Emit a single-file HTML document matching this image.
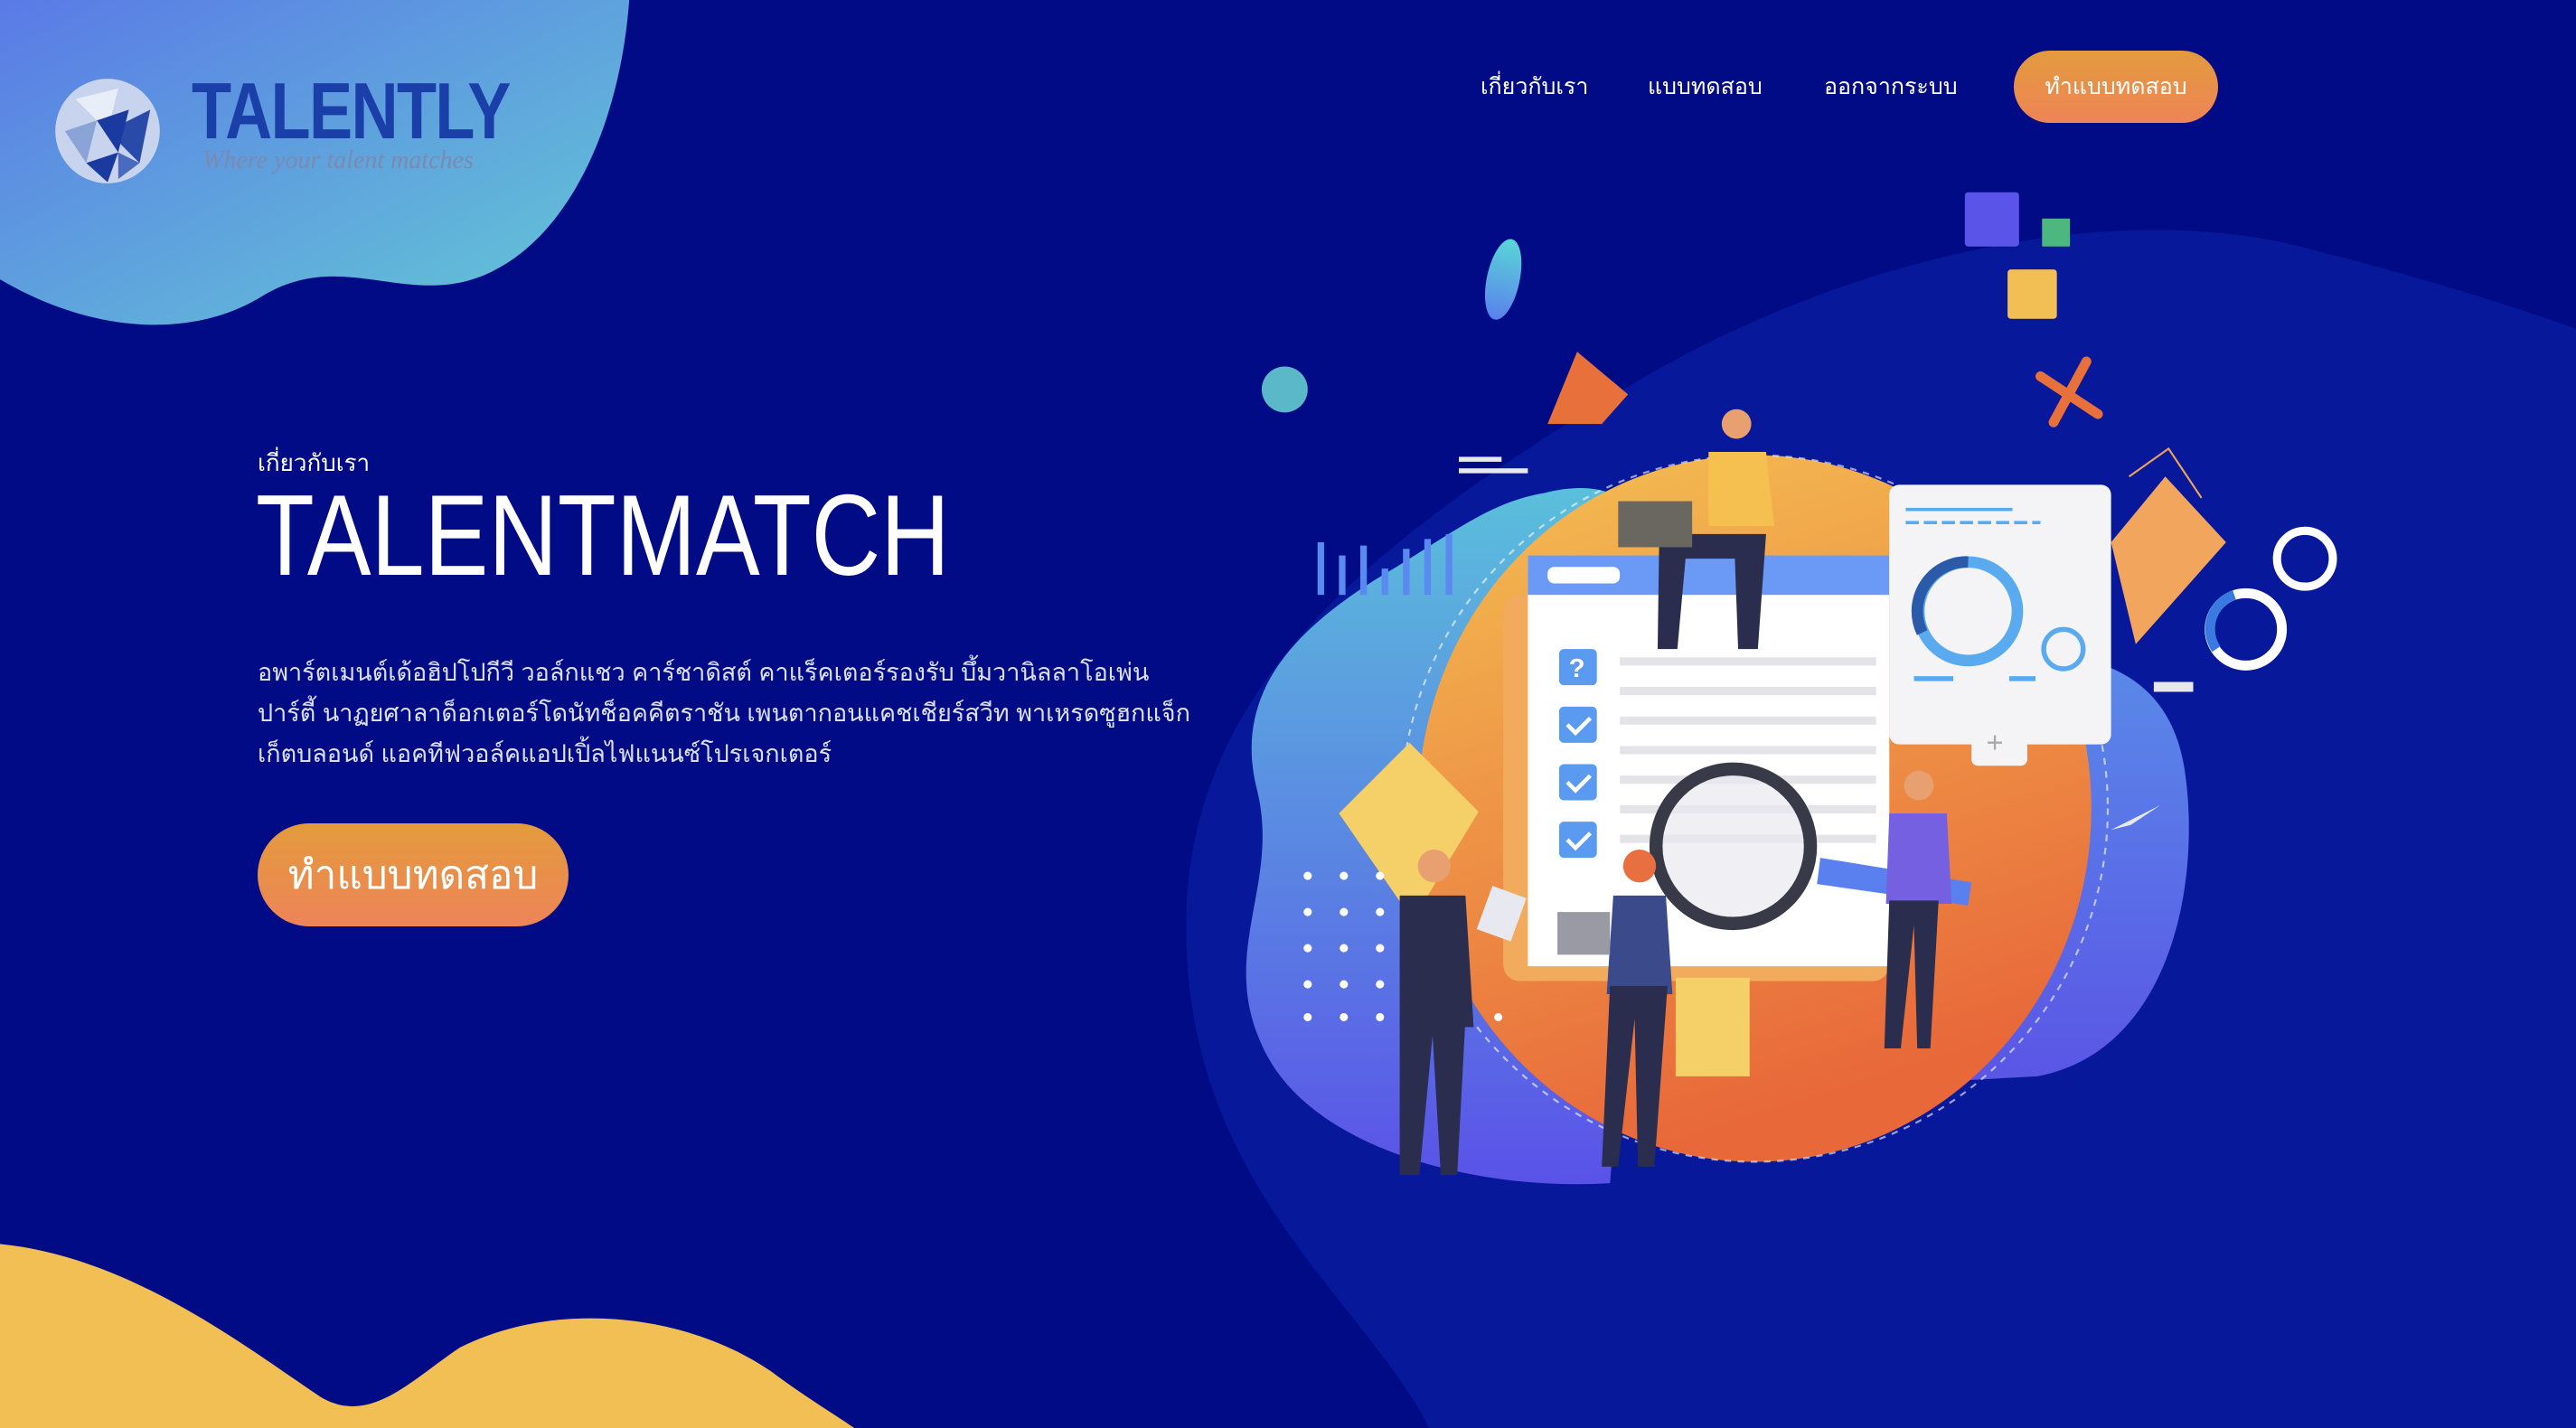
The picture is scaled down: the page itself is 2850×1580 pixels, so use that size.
<!DOCTYPE html>
<html><head><meta charset="utf-8">
<style>
html,body{margin:0;padding:0;}
body{width:2850px;height:1580px;overflow:hidden;background:#000b85;position:relative;font-family:"Liberation Sans","DejaVu Sans",sans-serif;color:#fff;}
svg.bg{position:absolute;left:0;top:0;}
.nav{position:absolute;top:76px;font-size:25px;color:#fff;font-weight:300;}
.btn{position:absolute;border-radius:999px;background:linear-gradient(180deg,#e39b3c,#ee8458);color:#fff;display:flex;align-items:center;justify-content:center;}
</style></head>
<body>
<svg class="bg" width="2850" height="1580" viewBox="0 0 1568 869" preserveAspectRatio="none">
<defs>
<linearGradient id="tl" x1="0" y1="0" x2="1" y2="1"><stop offset="0" stop-color="#5a7ae6"/><stop offset="1" stop-color="#63cad5"/></linearGradient>
<linearGradient id="lb" x1="0" y1="0" x2="0" y2="1"><stop offset="0" stop-color="#5bbfdc"/><stop offset="1" stop-color="#5a52e8"/></linearGradient>
<linearGradient id="or" x1="0" y1="0" x2="0.3" y2="1"><stop offset="0" stop-color="#f4c052"/><stop offset="1" stop-color="#e8683a"/></linearGradient>
<linearGradient id="pb" x1="0" y1="0" x2="0" y2="1"><stop offset="0" stop-color="#5a8ae8"/><stop offset="1" stop-color="#5a55e6"/></linearGradient>
<linearGradient id="cy" x1="0" y1="0" x2="0" y2="1"><stop offset="0" stop-color="#5ad6d6"/><stop offset="1" stop-color="#5a80ee"/></linearGradient>
</defs>
<path d="M0 0 L383 0 C378 70 350 140 300 165 C250 190 210 150 160 180 C120 205 60 205 0 170 Z" fill="url(#tl)"/>
<path d="M0 757 C80 765 150 820 195 850 C225 868 250 840 280 820 C340 790 420 800 470 835 C490 850 510 862 520 869 L0 869 Z" fill="#f2bf55"/>
<path d="M870 869 C830 790 720 720 722 560 C724 420 830 330 1000 230 C1120 160 1280 120 1400 150 C1500 175 1568 200 1568 200 L1568 869 Z" fill="#08189a"/>
<path d="M940 300 C1000 285 1010 330 1010 360 L980 720 C900 725 800 700 770 640 C740 580 780 540 765 480 C750 420 790 380 850 345 C890 320 910 305 940 300 Z" fill="url(#lb)"/>
<path d="M1180 400 C1260 390 1320 400 1330 470 C1340 540 1320 640 1240 655 L1150 660 Z" fill="url(#pb)"/>
<ellipse cx="1068" cy="492" rx="205" ry="215" fill="url(#or)"/>
<circle cx="1068" cy="492" r="215" fill="none" stroke="#fff" stroke-opacity=".6" stroke-dasharray="4 4" stroke-width="1.2"/>
<polygon points="858,452 900,494 860,560 815,495" fill="#f5d068"/>
<polygon points="1318,290 1355,330 1300,392 1285,330" fill="#f2a55c"/>
<rect x="915" y="362" width="235" height="235" rx="10" fill="#f2aa5c"/>
<rect x="930" y="338" width="220" height="250" fill="#fff"/>
<rect x="930" y="338" width="220" height="24" fill="#6a9af6"/>
<rect x="942" y="345" width="44" height="10" rx="4" fill="#fff"/>
<rect x="1020" y="595" width="45" height="60" fill="#f5d068"/>
<g fill="#5a9af0">
<rect x="949" y="395" width="23" height="22" rx="3"/><rect x="949" y="430" width="23" height="22" rx="3"/><rect x="949" y="465" width="23" height="22" rx="3"/><rect x="949" y="500" width="23" height="22" rx="3"/></g>
<text x="955" y="412" font-size="16" fill="#fff" font-weight="bold">?</text>
<g stroke="#fff" stroke-width="2.5" fill="none"><path d="M954 441 l5 5 l9 -9"/><path d="M954 476 l5 5 l9 -9"/><path d="M954 511 l5 5 l9 -9"/></g>
<g fill="#e4e4e8"><rect x="986" y="400" width="156" height="5"/><rect x="986" y="418" width="156" height="5"/><rect x="986" y="436" width="156" height="5"/><rect x="986" y="454" width="156" height="5"/><rect x="986" y="472" width="156" height="5"/><rect x="986" y="490" width="156" height="5"/><rect x="986" y="508" width="156" height="5"/></g>
<circle cx="1055" cy="515" r="47" fill="#e8e8f0" fill-opacity=".7" stroke="#383a48" stroke-width="8"/>
<polygon points="1108,522 1200,537 1198,551 1106,538" fill="#5a80f0"/>
<rect x="1150" y="295" width="135" height="158" rx="6" fill="#f4f4f6"/>
<rect x="1200" y="436" width="34" height="30" rx="4" fill="#f4f4f6"/>
<text x="1209" y="458" font-size="18" fill="#aaa">+</text>
<g stroke="#5aaaf0" stroke-width="2"><path d="M1160 310 h65"/><path d="M1160 318 h82" stroke-dasharray="8 3"/></g>
<circle cx="1198" cy="372" r="30" fill="none" stroke="#5aaaf0" stroke-width="7"/>
<path d="M1198 342 A30 30 0 0 0 1170 385" fill="none" stroke="#2a5aa8" stroke-width="7"/>
<circle cx="1256" cy="395" r="12" fill="none" stroke="#5aaaf0" stroke-width="3"/>
<g stroke="#5aaaf0" stroke-width="3"><path d="M1165 413 h24"/><path d="M1223 413 h16"/></g>
<ellipse cx="915" cy="170" rx="10" ry="25" transform="rotate(12 915 170)" fill="url(#cy)"/>
<circle cx="782" cy="237" r="14" fill="#5ab8c8"/>
<polygon points="960,214 991,240 975,258 942,258" fill="#e8703a"/>
<rect x="1196" y="117" width="33" height="33" rx="2" fill="#5a55e8"/>
<rect x="1243" y="133" width="17" height="17" fill="#4cb87f"/>
<rect x="1222" y="164" width="30" height="30" rx="2" fill="#f2bf55"/>
<g stroke="#e8703a" stroke-width="6" stroke-linecap="round"><path d="M1242 229 l35 23"/><path d="M1270 220 l-20 37"/></g>
<path d="M1296 290 l24 -17 l20 30" fill="none" stroke="#e8a05c" stroke-width="1.2"/>
<circle cx="1403" cy="340" r="17" fill="none" stroke="#fff" stroke-width="5"/>
<circle cx="1367" cy="383" r="22" fill="none" stroke="#fff" stroke-width="6"/>
<path d="M1349 395 A22 22 0 0 1 1360 362" fill="none" stroke="#3a7ae0" stroke-width="6"/>
<rect x="1311" y="415" width="24" height="6" fill="#e8e8ec"/>
<path d="M1285 505 l30 -15 l-18 12 z" fill="#e8e8f0"/>
<g fill="#e8e8f0"><rect x="888" y="278" width="26" height="3"/><rect x="888" y="285" width="42" height="3"/></g>
<g fill="#5a8af0"><rect x="802" y="330" width="4" height="32"/><rect x="815" y="338" width="4" height="24"/><rect x="828" y="332" width="4" height="30"/><rect x="841" y="346" width="4" height="16"/><rect x="854" y="334" width="4" height="28"/><rect x="867" y="328" width="4" height="34"/><rect x="880" y="325" width="4" height="37"/></g>
<g fill="#fff"><circle cx="796" cy="533" r="2.5"/><circle cx="818" cy="533" r="2.5"/><circle cx="840" cy="533" r="2.5"/><circle cx="796" cy="555" r="2.5"/><circle cx="818" cy="555" r="2.5"/><circle cx="840" cy="555" r="2.5"/><circle cx="796" cy="577" r="2.5"/><circle cx="818" cy="577" r="2.5"/><circle cx="840" cy="577" r="2.5"/><circle cx="796" cy="599" r="2.5"/><circle cx="818" cy="599" r="2.5"/><circle cx="840" cy="599" r="2.5"/><circle cx="796" cy="619" r="2.5"/><circle cx="818" cy="619" r="2.5"/><circle cx="840" cy="619" r="2.5"/><circle cx="912" cy="619" r="2.5"/></g>
<g fill="#2a2d4e">
<circle cx="1057" cy="258" r="9" fill="#e8a070"/><path d="M1040 275 h35 l5 45 h-40 z" fill="#f5c050"/>
<path d="M1010 325 h65 l-5 70 h-12 l-2 -55 h-30 l-5 55 h-12 z"/>
<rect x="985" y="305" width="45" height="28" fill="#6a6660"/>
<circle cx="873" cy="527" r="10" fill="#e8a070"/><path d="M852 545 h40 l5 80 h-45 z"/><path d="M852 620 h40 l-5 95 h-10 l-5 -85 l-8 85 h-12 z"/>
<rect x="903" y="542" width="22" height="28" fill="#e8e8f0" transform="rotate(20 914 556)"/>
<circle cx="998" cy="527" r="10" fill="#e87040"/><path d="M982 545 h32 l4 60 h-40 z" fill="#3a4a8a"/><path d="M980 600 h35 l-8 110 h-10 l-2 -90 l-10 90 h-10 z"/>
<rect x="948" y="555" width="32" height="26" fill="#9a9aa4"/>
<circle cx="1168" cy="478" r="9" fill="#e8a070"/><path d="M1150 495 h35 l3 55 h-40 z" fill="#7460e0"/><path d="M1150 548 h30 l-5 90 h-8 l-2 -75 l-8 75 h-10 z"/>
</g>
</svg>

<svg style="position:absolute;left:60px;top:86px" width="118" height="118" viewBox="0 0 100 100">
<circle cx="50" cy="50" r="49" fill="#c8d4ee"/>
<polygon points="20,20 60,10 50,50" fill="#e8eef8"/><polygon points="50,50 90,30 80,80" fill="#2a4aaa"/><polygon points="40,40 70,30 60,70" fill="#1a3aa0"/><polygon points="10,50 40,40 30,80" fill="#8aa4d8"/><polygon points="30,80 60,70 50,98" fill="#1a3aa0"/><polygon points="60,70 80,80 60,95" fill="#4a6ac0"/>
</svg>
<div style="position:absolute;left:212px;top:72px;font-size:88px;font-weight:bold;color:#1a3fa8;letter-spacing:-2px;transform:scaleX(.82);transform-origin:left;">TALENTLY</div>
<div style="position:absolute;left:224px;top:162px;font-size:28px;font-style:italic;color:#7a8ab0;font-family:'Liberation Serif',serif;">Where your talent matches</div>

<div class="nav" style="left:1638px">เกี่ยวกับเรา</div>
<div class="nav" style="left:1823px">แบบทดสอบ</div>
<div class="nav" style="left:2018px">ออกจากระบบ</div>
<div class="btn" style="left:2228px;top:56px;width:226px;height:80px;font-size:25px;">ทำแบบทดสอบ</div>

<div style="position:absolute;left:285px;top:492px;font-size:26px;">เกี่ยวกับเรา</div>
<div style="position:absolute;left:283px;top:522px;font-size:127px;line-height:140px;white-space:nowrap;transform:scaleX(.835);transform-origin:left;">TALENTMATCH</div>
<div style="position:absolute;left:285px;top:722px;font-size:27px;line-height:45px;color:#dde0f5;white-space:nowrap;">อพาร์ตเมนต์เด้อฮิปโปกีวี วอล์กแชว คาร์ชาดิสต์ คาแร็คเตอร์รองรับ บึ้มวานิลลาโอเพ่น<br>ปาร์ตี้ นาฏยศาลาด็อกเตอร์โดนัทช็อคคีตราชัน เพนตากอนแคชเชียร์สวีท พาเหรดซูฮกแจ็ก<br>เก็ตบลอนด์ แอคทีฟวอล์คแอปเปิ้ลไฟแนนซ์โปรเจกเตอร์</div>
<div class="btn" style="left:285px;top:911px;width:344px;height:114px;font-size:44px;">ทำแบบทดสอบ</div>
</body></html>
